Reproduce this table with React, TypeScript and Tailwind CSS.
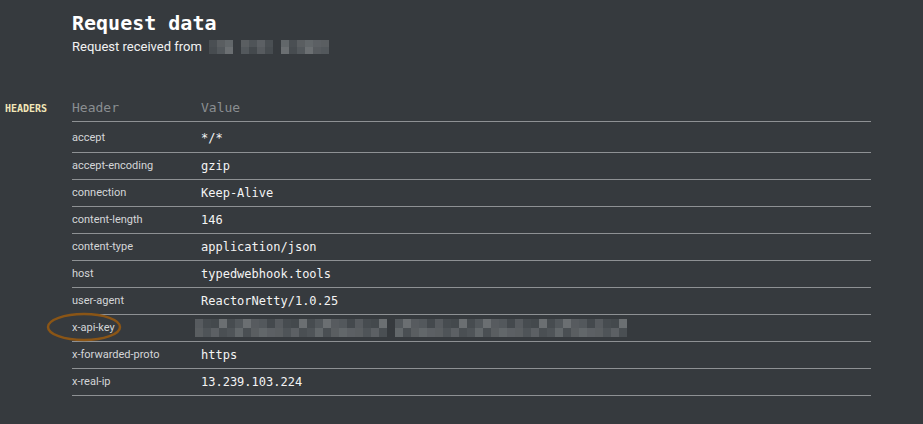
import React from 'react';

// Request data view: header table for a received webhook

const HEADERS: { name: string; value: string | null }[] = [
  { name: 'accept', value: '*/*' },
  { name: 'accept-encoding', value: 'gzip' },
  { name: 'connection', value: 'Keep-Alive' },
  { name: 'content-length', value: '146' },
  { name: 'content-type', value: 'application/json' },
  { name: 'host', value: 'typedwebhook.tools' },
  { name: 'user-agent', value: 'ReactorNetty/1.0.25' },
  { name: 'x-api-key', value: null },
  { name: 'x-forwarded-proto', value: 'https' },
  { name: 'x-real-ip', value: '13.239.103.224' },
];

const SHADES = ['#4a4f53', '#53585c', '#5c6064', '#474c50', '#62676a', '#575b5f', '#4f5458', '#6b6f72', '#5a5e61', '#44494d'];

const MONO = { fontFamily: '"DejaVu Sans Mono", "Liberation Mono", monospace' };

// pixelated "blurred" block, deterministic shades
function Pixelated({ cols, rows, cell, h, gaps = [], seed = 1 }: { cols: number; rows: number; cell: number; h: number; gaps?: number[]; seed?: number }) {
  return (
    <div className="flex flex-col">
      {Array.from({ length: rows }).map((_, r) => (
        <div key={r} className="flex">
          {Array.from({ length: cols }).map((_, c) => {
            const gap = gaps.includes(c);
            const shade = SHADES[(c * 7 + r * 3 + seed * 5 + ((c * c) % 4)) % SHADES.length];
            return (
              <div
                key={c}
                style={{ width: cell, height: h, background: gap ? 'transparent' : shade }}
              />
            );
          })}
        </div>
      ))}
    </div>
  );
}

export default function App() {
  return (
    <div className="w-[923px] h-[424px] bg-[#363a3e] overflow-hidden" style={{ fontFamily: 'Roboto, "Liberation Sans", sans-serif' }}>
      {/* Title */}
      <div className="pl-[72px] pt-[9px]">
        <h1 className="text-[20px] leading-[28px] font-bold text-white" style={MONO}>
          Request data
        </h1>
        <div className="flex items-center gap-[7px] text-[13px] leading-[20px] text-[#f2f2f2]">
          <span>Request received from</span>
          <Pixelated cols={15} rows={2} cell={8} h={7} gaps={[3, 8]} seed={2} />
        </div>
      </div>

      {/* Headers section */}
      <div className="flex mt-[38px]">
        <div className="w-[72px] pl-[5px] h-[27px] flex items-center text-[10px] text-[#f3e7b8] font-bold" style={MONO}>
          HEADERS
        </div>
        <div className="w-[799px] relative">
          <div className="flex h-[27px] items-center border-b border-[#8e9194] text-[13px] text-[#8a8e91]" style={MONO}>
            <div className="w-[129px]">Header</div>
            <div>Value</div>
          </div>
          {HEADERS.map((h, i) => (
            <div
              key={h.name}
              className={`flex items-center border-b border-[#8e9194] ${i === 0 ? 'h-[31px] pt-[2px]' : 'h-[27px]'}`}
            >
              <div className="w-[129px] text-[11px] text-[#d4d6d8]">{h.name}</div>
              {h.value !== null ? (
                <div className="text-[12px] text-[#f4f4f4]" style={MONO}>
                  {h.value}
                </div>
              ) : (
                <div className="-ml-[6px]">
                  <Pixelated cols={54} rows={2} cell={8} h={9} gaps={[24]} seed={5} />
                </div>
              )}
            </div>
          ))}
          {/* annotation circle around x-api-key */}
          <svg className="absolute left-[-26px] top-[217px]" width="80" height="30" viewBox="0 0 80 30">
            <ellipse cx="38" cy="15" rx="36" ry="13" fill="none" stroke="#8a5516" strokeWidth="2.5" />
          </svg>
        </div>
      </div>
    </div>
  );
}
